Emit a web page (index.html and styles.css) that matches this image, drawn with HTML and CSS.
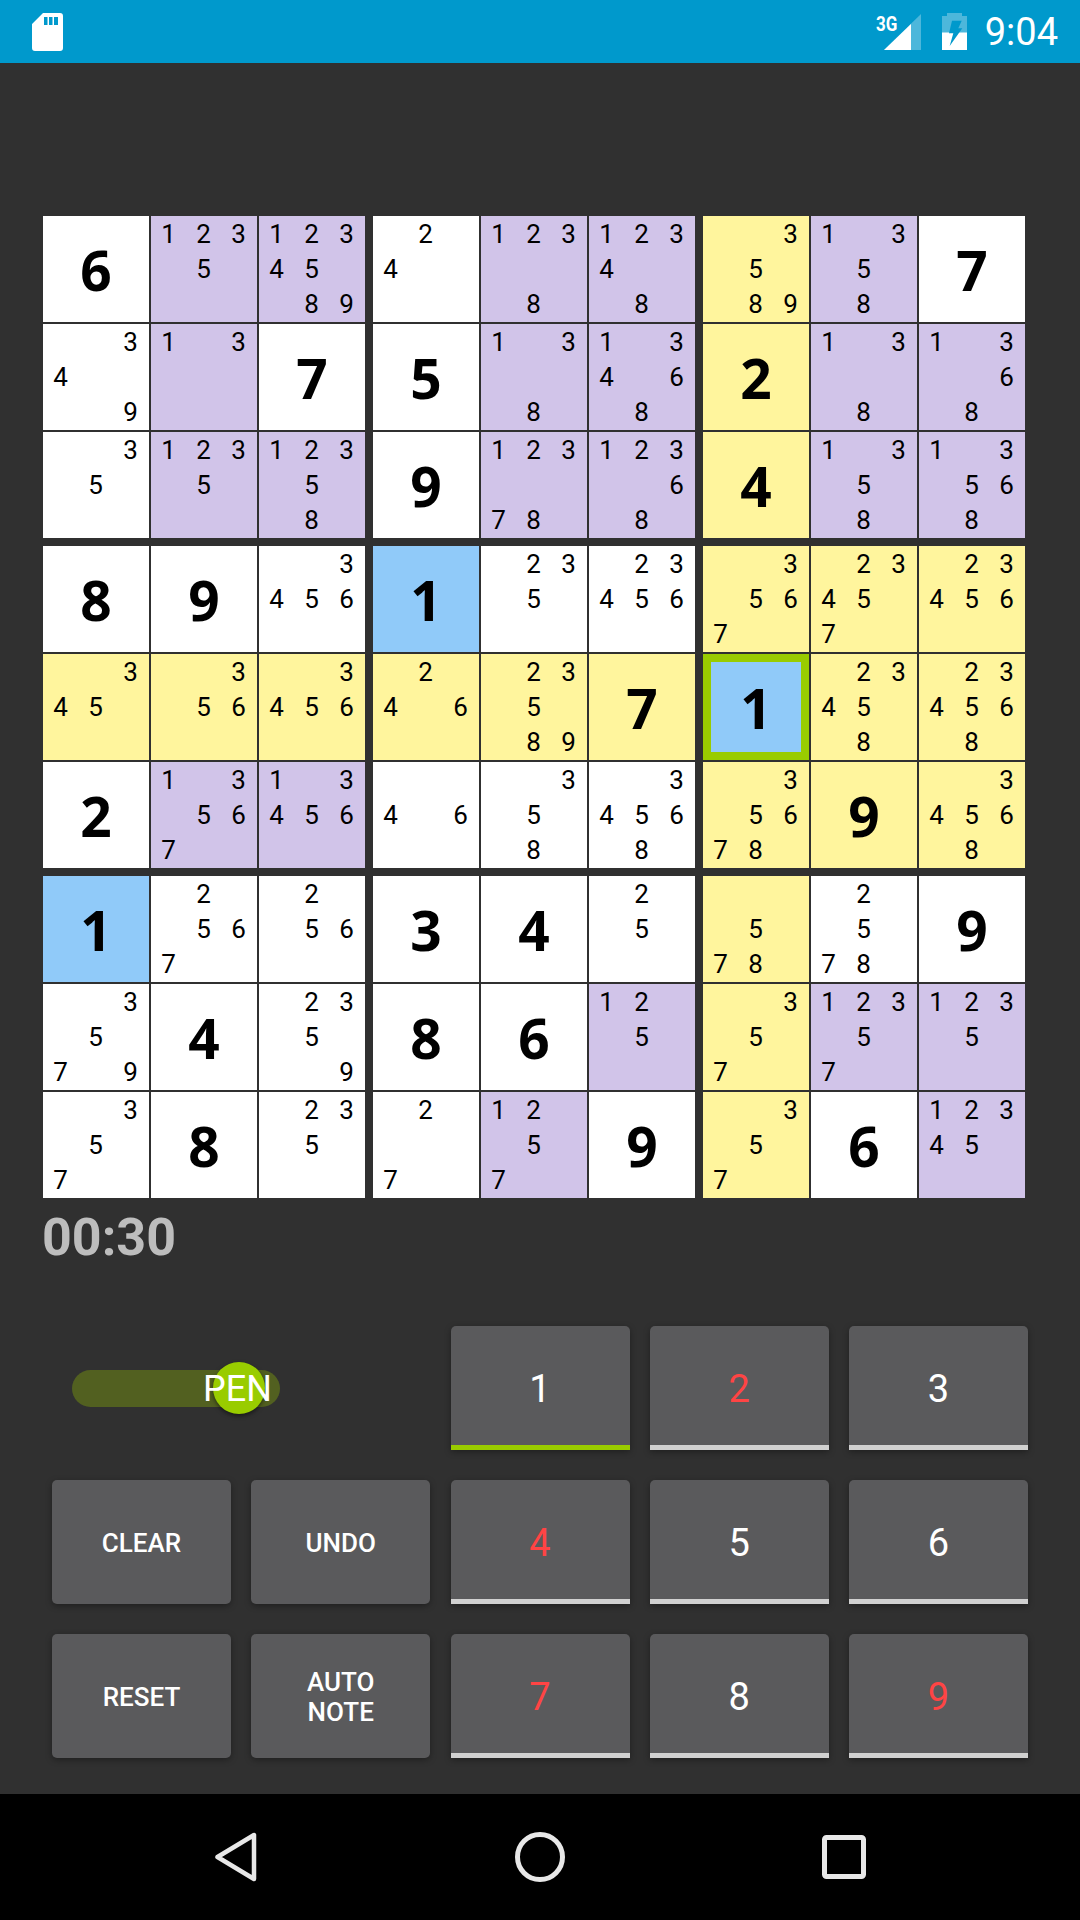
FILE: index.html
```html
<!DOCTYPE html>
<html>
  <head>
    <title>Sudoku</title>
    <link rel="stylesheet" href="styles.css">
  </head>
  <body>
    <div id="app">
      <div class="status-bar">
        <svg class="sd-icon" width="31" height="38" viewBox="0 0 31 38">
          <path fill="#fff" fill-rule="evenodd" d="M11 0H28Q31 0 31 3V35Q31 38 28 38H3Q0 38 0 35V11ZM12 4V12H15.5V4ZM17 4V12H20.5V4ZM22 4V12H26V4Z"/>
        </svg>
        <div class="status-right">
          <div class="signal">
            <span class="network">3G</span>
            <svg width="37" height="36" viewBox="0 0 37 36">
              <path fill="#fff" fill-opacity="0.3" d="M37 0V36H0Z"/>
              <path fill="#fff" d="M27 10V36H0Z"/>
            </svg>
          </div>
          <svg class="battery" width="25" height="37" viewBox="0 0 25 37">
            <path fill="#fff" fill-opacity="0.3" d="M5 0H20V3H25V37H0V3H5Z"/>
            <path fill="#fff" d="M0 19.5H25V37H0Z"/>
            <path fill="#0099cc" d="M10 7.7H19.7L16.3 15.3H20.3L7.7 33L11.3 20.3H7Z"/>
          </svg>
          <span class="clock">9:04</span>
        </div>
      </div>

      <div class="game">
        <div class="board" id="board"></div>
        <div class="timer">00:30</div>

        <div class="controls">
          <div class="switch">
            <div class="track"></div>
            <div class="thumb"></div>
            <span class="switch-label">PEN</span>
          </div>
          <div class="btn num active">1</div>
          <div class="btn num red">2</div>
          <div class="btn num">3</div>
          <div class="btn action">CLEAR</div>
          <div class="btn action">UNDO</div>
          <div class="btn num red">4</div>
          <div class="btn num">5</div>
          <div class="btn num">6</div>
          <div class="btn action">RESET</div>
          <div class="btn action">AUTO<br />NOTE</div>
          <div class="btn num red">7</div>
          <div class="btn num">8</div>
          <div class="btn num red">9</div>
        </div>
      </div>

      <div class="nav-bar">
        <svg width="42" height="50" viewBox="0 0 42 50">
          <path fill="none" stroke="#e8e8e8" stroke-width="4.5" stroke-linejoin="round" d="M39 3V47L2.5 25Z"/>
        </svg>
        <svg width="50" height="50" viewBox="0 0 50 50">
          <circle cx="25" cy="25" r="22.5" fill="none" stroke="#e8e8e8" stroke-width="5"/>
        </svg>
        <svg width="44" height="44" viewBox="0 0 44 44">
          <rect x="2.5" y="2.5" width="39" height="39" rx="2" fill="none" stroke="#e8e8e8" stroke-width="5"/>
        </svg>
      </div>
    </div>

    <script src="board.js"></script>
  </body>
</html>
```

FILE: styles.css
```css
* {
  box-sizing: border-box;
}

body {
  margin: 0;
  font-family: Roboto, sans-serif;
}

#app {
  display: flex;
  flex-direction: column;
  width: 1080px;
  height: 1920px;
  background: #303030;
}

.status-bar {
  display: flex;
  justify-content: space-between;
  align-items: center;
  height: 63px;
  padding: 0 22px 0 32px;
  background: #0099cc;
  color: #fff;
}

.status-right {
  display: flex;
  align-items: center;
}

.signal {
  position: relative;
  margin-right: 21px;
}

.signal svg {
  display: block;
}

.network {
  position: absolute;
  top: 0;
  left: -8px;
  font-size: 20px;
  font-weight: 700;
  line-height: 20px;
  transform: scaleX(0.85);
  transform-origin: left;
}

.clock {
  margin-left: 18px;
  font-size: 38px;
}

.game {
  flex: 1;
  padding: 153px 0 0 43px;
}

.board {
  display: grid;
  grid-template-columns: repeat(3, 322px);
  gap: 8px;
}

.block {
  display: grid;
  grid-template-columns: repeat(3, 106px);
  grid-auto-rows: 106px;
  gap: 2px;
}

.cell {
  background: #fff;
  color: #000;
}

.cell.yellow {
  background: #fff59d;
}

.cell.purple {
  background: #d1c4e9;
}

.cell.blue {
  background: #90caf9;
}

.cell.selected {
  border: 8px solid #99cc00;
}

.big {
  display: flex;
  justify-content: center;
  align-items: center;
  font-family: "Noto Sans", sans-serif;
  font-size: 55px;
  font-weight: 700;
}

.notes {
  display: grid;
  grid-template-columns: repeat(3, 1fr);
  grid-template-rows: repeat(3, 1fr);
  padding: 1px 1px 0 0;
  font-size: 26px;
  line-height: 35px;
  text-align: center;
}

.timer {
  margin: 9px 0 0 -1px;
  font-size: 52px;
  font-weight: 700;
  color: #bdbdbd;
}

.controls {
  display: grid;
  grid-template-columns: repeat(5, 179px);
  grid-auto-rows: 124px;
  column-gap: 20.25px;
  row-gap: 30px;
  margin: 58px 0 0 9px;
}

.switch {
  position: relative;
  grid-column: span 2;
}

.track {
  position: absolute;
  top: 44px;
  left: 20px;
  width: 208px;
  height: 37px;
  border-radius: 19px;
  background: #526020;
}

.thumb {
  position: absolute;
  top: 36px;
  left: 161px;
  width: 52px;
  height: 52px;
  border-radius: 50%;
  background: #99cc00;
  box-shadow: 0 2px 4px rgba(0, 0, 0, 0.5);
}

.switch-label {
  position: absolute;
  top: 42px;
  left: 151px;
  font-size: 36px;
  line-height: 42px;
  color: #fff;
}

.btn {
  display: flex;
  justify-content: center;
  align-items: center;
  border-radius: 5px 5px 0 0;
  background: #5a5a5c;
  box-shadow: 0 2px 6px rgba(0, 0, 0, 0.35);
  color: #fff;
  text-align: center;
}

.action {
  padding-top: 1px;
  border-radius: 5px;
  font-size: 26px;
  font-weight: 500;
  line-height: 30px;
}

.num {
  padding-top: 6px;
  border-bottom: 5px solid #d0d0d0;
  font-size: 38px;
}

.num.active {
  border-bottom-color: #99cc00;
}

.num.red {
  color: #ff4444;
}

.nav-bar {
  display: flex;
  align-items: center;
  height: 126px;
  background: #000;
}

.nav-bar svg:nth-child(1) {
  margin-left: 215px;
}

.nav-bar svg:nth-child(2) {
  margin-left: 258px;
}

.nav-bar svg:nth-child(3) {
  margin-left: 257px;
}
```

FILE: board.js
```js
// w = white, y = yellow, p = purple, b = blue, s = selected
// a single digit with a capital colour letter is a filled cell, the rest are pencil notes
const rows = [
  ["W6", "p1235", "p1234589", "w24", "p1238", "p12348", "y3589", "p1358", "W7"],
  ["w349", "p13", "W7", "W5", "p138", "p13468", "Y2", "p138", "p1368"],
  ["w35", "p1235", "p12358", "W9", "p12378", "p12368", "Y4", "p1358", "p13568"],
  ["W8", "W9", "w3456", "B1", "w235", "w23456", "y3567", "y23457", "y23456"],
  ["y345", "y356", "y3456", "y246", "y23589", "Y7", "S1", "y23458", "y234568"],
  ["W2", "p13567", "p13456", "w46", "w358", "w34568", "y35678", "Y9", "y34568"],
  ["B1", "w2567", "w256", "W3", "W4", "w25", "y578", "w2578", "W9"],
  ["w3579", "W4", "w2359", "W8", "W6", "p125", "y357", "p12357", "p1235"],
  ["w357", "W8", "w235", "w27", "p1257", "W9", "y357", "W6", "p12345"],
];

const colours = { w: "white", y: "yellow", p: "purple", b: "blue", s: "blue selected" };

function makeCell(data) {
  const cell = document.createElement("div");
  const kind = data[0];
  const digits = data.slice(1);

  if (kind === kind.toUpperCase()) {
    cell.className = `cell big ${colours[kind.toLowerCase()]}`;
    cell.textContent = digits;
    return cell;
  }

  cell.className = `cell notes ${colours[kind]}`;
  for (let n = 1; n <= 9; n++) {
    const note = document.createElement("span");
    note.textContent = digits.includes(n) ? n : "";
    cell.appendChild(note);
  }
  return cell;
}

const board = document.getElementById("board");

for (let b = 0; b < 9; b++) {
  const block = document.createElement("div");
  block.className = "block";
  const top = Math.floor(b / 3) * 3;
  const left = (b % 3) * 3;
  for (let r = top; r < top + 3; r++) {
    for (let c = left; c < left + 3; c++) {
      block.appendChild(makeCell(rows[r][c]));
    }
  }
  board.appendChild(block);
}
```
